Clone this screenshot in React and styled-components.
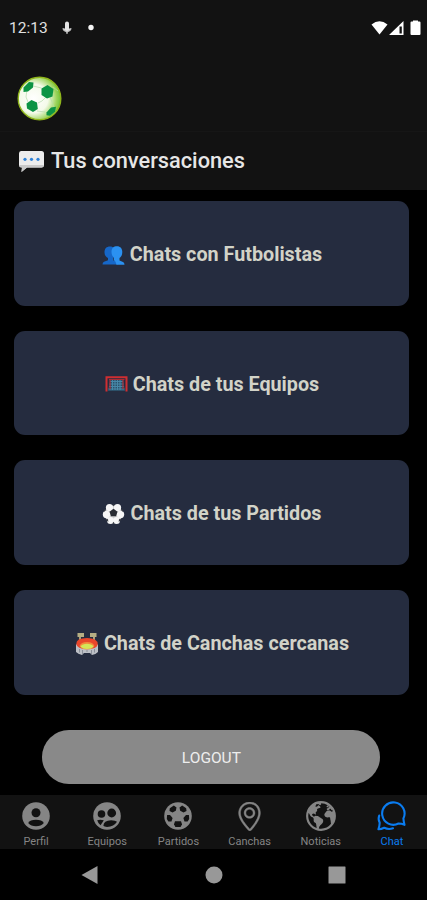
import React from "react";
import styled, { createGlobalStyle } from "styled-components";
import { SlLocationPin } from "react-icons/sl";
import { IoEarth } from "react-icons/io5";

const ProfileTabIcon = () => (
  <svg width="28" height="28" viewBox="-14 -14 28 28">
    <circle r="13.8" fill="currentColor" />
    <g fill="#121212">
      <circle cx="0" cy="-3.2" r="4.5" />
      <path d="M-7.800 7Q-6 3.800 0 3.800T7.800 7Q5 10.300 0 10.300T-7.800 7z" />
    </g>
  </svg>
);

const TeamsTabIcon = () => (
  <svg width="28" height="28" viewBox="-14 -14 28 28">
    <circle r="13.8" fill="currentColor" />
    <g fill="#121212">
      <circle cx="-5.500" cy="-2" r="3.800" />
      <circle cx="4.700" cy="-3" r="4.400" />
      <path d="M-9.800 4.200Q-7 3.400-3.200 4.200L-6.400 9.200Q-9 7.300-9.800 4.200z" />
      <path d="M-3.600 9.800Q-3.500 4.300 4.200 4.200 8.500 4.200 10 5.800 7 10.600 0 10.900-2.800 10.900-3.600 9.800z" />
    </g>
  </svg>
);

const BallTabIcon = () => (
  <svg width="28" height="28" viewBox="-14 -14 28 28">
    <circle r="13.8" fill="currentColor" />
    <g fill="#121212">
      <path d="M-8.200-7.800-4.200-10.600-1.500-8.500-2.200-5.200-5.500-3.500-8.500-5z" />
      <path d="M8.200-7.800 4.200-10.600 1.500-8.500 2.200-5.200 5.500-3.500 8.500-5z" />
      <path d="M-10.900-.9-8-1-5.400 2-6.500 5.600-9.600 5.600-11.200 3z" />
      <path d="M10.900-.9 8-1 5.400 2 6.500 5.600 9.600 5.600 11.200 3z" />
      <path d="M-3 5.200H3L4 8.200 2.600 11H-2.600L-4 8.200z" />
    </g>
  </svg>
);

const ChatTabIcon = () => (
  <svg width="31" height="31" viewBox="0 0 31 31" fill="none" stroke="currentColor" strokeWidth="2.1" strokeLinecap="round" strokeLinejoin="round">
    <path d="M27.400 17.500A11.200 11.200 0 1 0 22.500 22.500Q25.500 22.500 28.500 23.800 27.600 20.500 27.400 17.500z" />
    <path d="M3.200 14.500Q1.800 18.200 3.700 21.800 3.600 25 2.400 28.300 5.300 28.200 8.200 26.800 12.500 29 17 27.300" />
  </svg>
);

const AppLogo = () => (
  <svg width="46" height="46" viewBox="0 0 46 46">
    <defs>
      <radialGradient id="ball" cx="0.36" cy="0.5" r="0.68">
        <stop offset="0" stopColor="#ffffff" />
        <stop offset="0.5" stopColor="#f4fae9" />
        <stop offset="0.8" stopColor="#9ad358" />
        <stop offset="1" stopColor="#5cb82c" />
      </radialGradient>
    </defs>
    <circle cx="22.5" cy="22.5" r="21.3" fill="url(#ball)" stroke="#8fb51c" strokeWidth="1.400" />
    <path d="M16 10l8.500 2M29 21l-4 4-4 2M10 13l-1 8 2 5M33 21l4 10M20 35l8 1M36 11l5 4" fill="none" stroke="#b5dbab" strokeWidth="0.700" />
    <g fill="#0c9444">
      <path d="M6.500 11.500l5.500-5.500 4.500.5-.5 5-5 4-4.500.5z" />
      <path d="M24.500 12.500l6-3.500 6 4-1 7.500-5.500 2-5.500-3.500z" />
      <path d="M9.500 27.500l5-3.500 5.500 2.500.8 6.500-4.800 3-6-3.500z" />
      <path d="M29.500 36.500l4.500-5 5-.8-1 5-5 4-3.500-.5z" />
    </g>
  </svg>
);

const SpeechIcon = () => (
  <svg width="27" height="23" viewBox="0 0 27 23">
    <path d="M3 1H23.500Q26 1 26 3.500V15Q26 17.500 23.500 17.500H9L3.500 22 4 17.500H3Q1 17.500 1 15V3.500Q1 1 3 1z" fill="#ececec" />
    <path d="M1.500 15H25.700Q25.500 17.500 23.500 17.500H9L3.500 22 4 17.500Q2 17.500 1.500 15z" fill="#c9c9c9" />
    <g fill="#2f82d8">
      <circle cx="7" cy="9.300" r="1.600" />
      <circle cx="13.500" cy="9.300" r="1.600" />
      <circle cx="20" cy="9.300" r="1.600" />
    </g>
  </svg>
);

const PeopleIcon = () => (
  <svg width="23" height="22" viewBox="0 0 23 22">
    <path d="M2.500 8.500c0-4 2-6 5.500-6s5.500 2 5.500 6c0 2.600-1 4.500-2.400 5.600v2.200l4.300 1.700V20.500H.5Q.5 18.500 2 17.800l4-1.500v-2.200C3.800 12.800 2.500 11 2.500 8.500z" fill="#1667c8" />
    <path d="M9.500 8C9.500 4.300 11.500 2.300 15 2.300s5.300 2.300 5.300 5.700c0 3-1 4.800-2.800 6v2.500l3.500 1.500Q22.500 18.700 22.500 20.800H14.500Q14 17.500 11.800 16V13.500Q9.500 11.500 9.500 8z" fill="#2b91f1" />
  </svg>
);

const GoalIcon = () => (
  <svg width="23" height="22" viewBox="0 0 23 22">
    <path d="M5 6.500H18L20 18H3z" fill="#2c5068" />
    <path d="M5 8.500H18M4.500 11H18.500M4 13.500H19M3.500 16H19.500M7.500 6v11M10 6v11M12.500 6v11M15 6v11" stroke="#4788a8" strokeWidth="1.100" />
    <path d="M1.500 18.500V4.200H21.500V18.500" fill="none" stroke="#cf2e32" strokeWidth="2" />
    <path d="M4 6.500H19.500M5 7v9M18 7v9" stroke="#a92e37" strokeWidth="1.200" />
  </svg>
);

const BallIcon = () => (
  <svg width="23" height="22" viewBox="0 0 23 22">
    <circle cx="11.500" cy="11" r="9" fill="#cfcfd0" />
    <g fill="#f6f6f6">
      <circle cx="7.500" cy="4.500" r="3.600" />
      <circle cx="15.500" cy="4.500" r="3.600" />
      <circle cx="4.500" cy="11.500" r="3.700" />
      <circle cx="18.500" cy="11.500" r="3.700" />
      <circle cx="8.500" cy="17.500" r="3.500" />
      <circle cx="14.500" cy="17.500" r="3.500" />
    </g>
    <path d="M11.500 5.800 15.500 8.800 14 13.300H9L7.500 8.800z" fill="#292c33" />
    <path d="M9.800 1.500h3.400l-1.700 1.800zM1.800 6.500l2.200.3L2.500 9zM21.200 6.500l-2.200.3L20.500 9zM3.500 16.500l2.500-.5.300 3zM19.500 16.500l-2.500-.5-.3 3zM10.300 20.500h2.400l-1.200-1.800z" fill="#3b3e45" />
  </svg>
);

const StadiumIcon = () => (
  <svg width="24" height="24" viewBox="0 0 24 24">
    <path d="M5 3v6M19 3v6" stroke="#a8a27b" strokeWidth="2" />
    <path d="M2.500 1H9v4H2.500zM15 1h6.500v4H15z" fill="#b5ae83" />
    <path d="M1 12Q3 14 12 14t11-2v8Q20 23 17 23l-2-2H9l-2 2Q3 22 1 20z" fill="#bcbfc5" />
    <path d="M1.300 12Q1 6 12 6t10.700 6.500Q22 17 12 17T1.300 12z" fill="#e9462b" />
    <path d="M4.500 14q1.500-4 7.500-4t7.500 4q-2 3.500-7.500 3.500T4.500 14z" fill="#f28a3c" />
    <path d="M5.500 14.500q2-2.700 6.500-2.700t6.500 2.700q-2 2.500-6.500 2.500t-6.500-2.500z" fill="#d5e558" />
    <path d="M4.500 17v3.500M7.500 18v4M12 18v2M16.500 18v4M19.500 17v3.500" stroke="#8b9099" strokeWidth="1" />
  </svg>
);

const chats = [
  { label: "Chats con Futbolistas", icon: <PeopleIcon /> },
  { label: "Chats de tus Equipos", icon: <GoalIcon /> },
  { label: "Chats de tus Partidos", icon: <BallIcon /> },
  { label: "Chats de Canchas cercanas", icon: <StadiumIcon /> },
];

const tabs = [
  { label: "Perfil", icon: <ProfileTabIcon /> },
  { label: "Equipos", icon: <TeamsTabIcon /> },
  { label: "Partidos", icon: <BallTabIcon /> },
  { label: "Canchas", icon: <SlLocationPin size={29} stroke="currentColor" strokeWidth={16} /> },
  { label: "Noticias", icon: <IoEarth size={34} /> },
  { label: "Chat", icon: <ChatTabIcon />, active: true },
];

const App = () => {
  return (
    <>
      <GlobalStyle />
      <Screen>
        <StatusBar>
          <Clock>12:13</Clock>
          <StatusLeft width="34" height="16" viewBox="0 0 34 16">
            <path d="M4 3.500a2 2 0 0 1 4 0v5h2L6 13 2 8.500h2z" fill="#e4e4e4" />
            <path d="M2 8.200Q2.500 11.500 6 11.500t4-3.300M6 11.500v2.500" fill="none" stroke="#c4c4c4" strokeWidth="1.200" />
            <circle cx="30" cy="7.500" r="2.700" fill="#f4f4f4" />
          </StatusLeft>
          <StatusRight width="51" height="17" viewBox="0 0 51 17">
            <path d="M.5 4.500Q8.500-2 16.500 4.500L8.500 14.500z" />
            <path d="M18 15 32.500 1V15zM28.500 6.500v7h2.300v-7z" fillRule="evenodd" />
            <path d="M42 1.500V.5h5v1h1.500Q49.500 1.500 49.500 2.500V14Q49.500 15 48.500 15H40.500Q39.500 15 39.500 14V2.500Q39.500 1.500 40.500 1.500z" />
          </StatusRight>
        </StatusBar>
        <LogoBar>
          <AppLogo />
        </LogoBar>
        <TitleBar>
          <SpeechIcon />
          <Title>Tus conversaciones</Title>
        </TitleBar>
        <ChatList>
          {chats.map((chat) => (
            <ChatCard key={chat.label}>
              {chat.icon}
              <span>{chat.label}</span>
            </ChatCard>
          ))}
        </ChatList>
        <LogoutBtn>LOGOUT</LogoutBtn>
        <TabBar>
          {tabs.map((tab) => (
            <Tab key={tab.label} $active={tab.active}>
              <TabIcon>{tab.icon}</TabIcon>
              <TabLabel>{tab.label}</TabLabel>
            </Tab>
          ))}
        </TabBar>
        <SystemNav>
          <svg width="18" height="20" viewBox="0 0 18 20">
            <path d="M0.500 10 16.500 1V19z" />
          </svg>
          <svg width="18" height="18" viewBox="0 0 18 18">
            <circle cx="9" cy="9" r="8.500" />
          </svg>
          <svg width="18" height="18" viewBox="0 0 18 18">
            <rect x="0.500" y="0.500" width="17" height="17" rx="0.500" />
          </svg>
        </SystemNav>
      </Screen>
    </>
  );
};

const GlobalStyle = createGlobalStyle`
  * {
    box-sizing: border-box;
  }
  body {
    margin: 0;
    background: #000000;
    font-family: Roboto, "Liberation Sans", sans-serif;
  }
  svg {
    flex-shrink: 0;
  }
`;
const Screen = styled.div`
  display: flex;
  flex-direction: column;
  width: 427px;
  height: 900px;
  overflow: hidden;
  background: #000000;
`;
const StatusBar = styled.div`
  display: flex;
  align-items: center;
  height: 66px;
  padding: 1px 5px 11px 9px;
  background: #121212;
`;
const Clock = styled.span`
  width: 52px;
  color: #e0e0e0;
  font-size: 15.500px;
  line-height: 20px;
  white-space: nowrap;
`;
const StatusLeft = styled.svg`
  display: block;
`;
const StatusRight = styled.svg`
  margin-left: auto;
  fill: #ffffff;
`;
const LogoBar = styled.div`
  height: 66px;
  padding: 10px 17px;
  border-bottom: 1px solid #161616;
  background: #121212;
`;
const TitleBar = styled.div`
  display: flex;
  align-items: center;
  height: 58px;
  padding: 0 18px;
  background: #121212;
`;
const Title = styled.h1`
  margin: 0 0 0 6px;
  color: #e6e6e6;
  font-size: 21.750px;
  font-weight: 500;
  line-height: 28px;
  white-space: nowrap;
`;
const ChatList = styled.div`
  display: flex;
  flex-direction: column;
  gap: 25px;
  padding: 11px 18px 0 14px;
`;
const ChatCard = styled.button`
  display: flex;
  align-items: center;
  justify-content: center;
  gap: 5px;
  height: 104.700px;
  padding: 2.400px 0 0 1px;
  border: 0;
  border-radius: 11px;
  background: #252c3f;
  color: #d2d3c8;
  font-family: inherit;
  font-size: 19.750px;
  font-weight: 700;
  white-space: nowrap;
`;
const LogoutBtn = styled.button`
  width: 338px;
  height: 54px;
  margin: 35.200px 0 0 42.400px;
  padding: 2px 0 0;
  border: 0;
  border-radius: 27px;
  background: #898989;
  color: #eeeeee;
  font-family: inherit;
  font-size: 15.500px;
`;
const TabBar = styled.div`
  display: flex;
  height: 54px;
  margin-top: auto;
  background: #121212;
`;
const Tab = styled.div`
  display: flex;
  flex: 1;
  flex-direction: column;
  align-items: center;
  padding-left: 1px;
  color: ${(props) => (props.$active ? "#0a7cf0" : "#858585")};
`;
const TabIcon = styled.div`
  display: flex;
  align-items: center;
  justify-content: center;
  height: 42px;
`;
const TabLabel = styled.span`
  margin-top: -1px;
  font-size: 11px;
  line-height: 12px;
`;
const SystemNav = styled.div`
  display: flex;
  align-items: center;
  justify-content: space-between;
  height: 51px;
  padding: 0 81px;
  fill: #989898;
`;
export default App;
